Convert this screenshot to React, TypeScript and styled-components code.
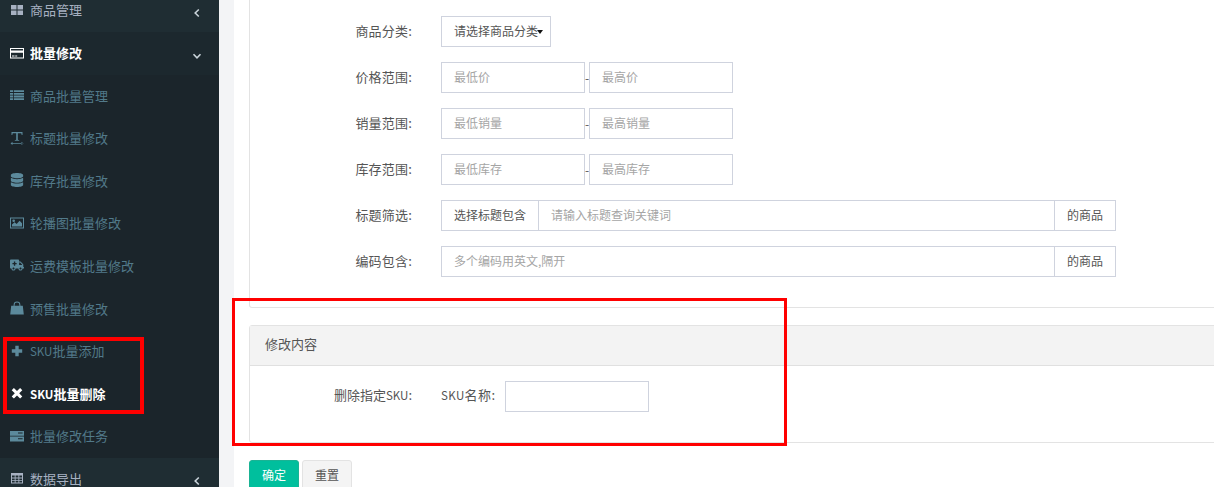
import React from "react";
import styled, { createGlobalStyle } from "styled-components";
import { FaDatabase, FaAmbulance } from "react-icons/fa";

const Global = createGlobalStyle`
  html, body { margin: 0; padding: 0; background: #fff; overflow: hidden; }
  * { box-sizing: border-box; }
  body { font-family: "Noto Sans CJK SC", "Liberation Sans", sans-serif; font-size: 13px; color: #555; }
`;

const Page = styled.div`
  position: relative; display: flex; width: 1214px; height: 487px; overflow: hidden;
`;
const Sidebar = styled.nav`
  flex: 0 0 219px; background: #1b252b; margin-top: -10.4px; height: 510px;
`;
const NavItem = styled.div<{ $kind: "top" | "open" | "sub" | "on" }>`
  display: flex; align-items: center; height: 42.6px; padding: 0 17px 2px 10px; gap: 6px;
  font-size: 13px;
  background: ${(p) => (p.$kind === "top" ? "#1f2d33" : p.$kind === "open" ? "#1c282e" : "transparent")};
  color: ${(p) => (p.$kind === "top" ? "#a7b1c2" : p.$kind === "sub" ? "#527a8a" : "#fff")};
  font-weight: ${(p) => (p.$kind === "open" || p.$kind === "on" ? 700 : 400)};
  & > svg:first-child {
    width: 14px; height: 14px; flex: none;
    color: ${(p) => (p.$kind === "sub" ? "#5c8a9c" : "inherit")};
  }
`;
const NavLabel = styled.span`flex: 1; white-space: nowrap;`;
const Latin = styled.span`font-size: 11.5px;`;
const Chevron = styled.svg`width: 10px; height: 10px; flex: none; color: #c9d3da; margin-top: 6px;`;

const Main = styled.main`
  flex: 1; min-width: 0; background: #fff; border-left: 15px solid #f3f4f6; padding-left: 15px;
  display: flex; flex-direction: column;
`;
const FilterPanel = styled.section`
  width: 1000px; height: 308px; flex: none; background: #fff; border: 1px solid #e3e3e3; border-top: 0;
  border-radius: 0 0 3px 3px; padding-top: 16px; display: flex; flex-direction: column; gap: 15px;
`;
const Row = styled.div`display: flex; align-items: center; height: 31px;`;
const Label = styled.label`
  flex: 0 0 162px; text-align: right; white-space: nowrap; color: #555; margin-right: 29px; padding-bottom: 2px;
  letter-spacing: .2px;
`;
const Select = styled.div`
  position: relative; width: 110px; height: 31px; border: 1px solid #cfd3de; padding: 0 0 2px 12px;
  display: flex; align-items: center; color: #555; white-space: nowrap; overflow: hidden; font-size: 12px;
  &::after {
    content: ""; position: absolute; left: 95px; top: 13px;
    border-left: 3px solid transparent; border-right: 3px solid transparent; border-top: 4px solid #111;
  }
`;
const Input = styled.input<{ $w?: number }>`
  width: ${(p) => p.$w ?? 144}px; height: 31px; border: 1px solid #cfd3de; padding: 0 12px 2px; outline: 0;
  font: 12px "Noto Sans CJK SC", sans-serif; color: #555; background: #fff; border-radius: 0;
  &::placeholder { color: #a5a5a5; opacity: 1; }
`;
const Dash = styled.span`width: 4px; text-align: center; color: #555; font-size: 12px; line-height: 1;`;
const Group = styled.div`display: flex; width: 675px; height: 31px;`;
const Addon = styled.span<{ $w: number; $left?: boolean }>`
  flex: 0 0 ${(p) => p.$w}px; height: 31px; border: 1px solid #cfd3de; display: flex; align-items: center;
  justify-content: center; font-size: 12px; color: #555; white-space: nowrap; padding-bottom: 2px;
  ${(p) => (p.$left ? "border-right: 0;" : "border-left: 0;")}
`;
const GroupInput = styled(Input)`flex: 1; width: auto; min-width: 0;`;

const EditPanel = styled.section`
  width: 1000px; height: 118px; flex: none; margin-top: 17px; border: 1px solid #e3e3e3; border-radius: 3px; background: #fff;
`;
const PanelTitle = styled.h3`
  margin: 0; height: 40px; padding: 0 15px 5px; display: flex; align-items: center; background: #f3f3f3;
  border-bottom: 1px solid #e0e0e0; font-size: 13px; font-weight: 400; color: #555;
`;
const EditRow = styled.div`display: flex; align-items: flex-start; padding-top: 15px;`;
const EditLabel = styled(Label)`padding: 4px 0 0; color: #555; letter-spacing: 0;`;
const SkuLabel = styled.span`
  flex: 0 0 64px; white-space: nowrap; font-size: 13px; line-height: 27px; color: #555; letter-spacing: .4px;
`;
const Actions = styled.div`display: flex; gap: 3px; margin-top: 17px;`;
const Button = styled.button<{ $primary?: boolean }>`
  width: 50px; height: 32px; padding: 0 0 3px; border-radius: 3px; font: 12px "Noto Sans CJK SC", sans-serif;
  border: 1px solid ${(p) => (p.$primary ? "#1ab394" : "#e3e3e3")};
  background: ${(p) => (p.$primary ? "#00bf9d" : "#f4f4f4")};
  color: ${(p) => (p.$primary ? "#fff" : "#555")};
`;
const Marker = styled.div<{ $x: number; $y: number; $w: number; $h: number; $b: number }>`
  position: absolute; left: ${(p) => p.$x}px; top: ${(p) => p.$y}px; width: ${(p) => p.$w}px; height: ${(p) => p.$h}px;
  border: ${(p) => p.$b}px solid #f00; pointer-events: none;
`;

const Svg = ({ children }: { children: React.ReactNode }) => (
  <svg viewBox="0 0 14 14" fill="currentColor" aria-hidden="true">{children}</svg>
);
const IconGrid = () => (
  <Svg><path d="M1 2h5.5v4.5H1zM7.5 2H13v4.5H7.5zM1 7.5h5.5V12H1zM7.5 7.5H13V12H7.5z" /></Svg>
);
const IconCard = () => (
  <Svg><path fillRule="evenodd" d="M0 2h14v10.5H0zM1 3v1.5h12V3zM1 6.8V11.5h12V6.8zM2 9.6h2.5v.8H2zM5.2 9.6h2v.8h-2z" /></Svg>
);
const IconList = () => (
  <Svg><path d="M0 2.2h3v1.8H0zM3.8 2.2H14v1.8H3.8zM0 4.9h3v1.8H0zM3.8 4.9H14v1.8H3.8zM0 7.6h3v1.8H0zM3.8 7.6H14v1.8H3.8zM0 10.3h3v1.8H0zM3.8 10.3H14v1.8H3.8z" /></Svg>
);
const IconText = () => (
  <Svg><path d="M1.5 1h11v3h-.8l-.4-1.8H7.8v6.6l1.4.4v.6H4.8v-.6l1.4-.4V2.2H2.7L2.3 4h-.8zM1 12h12v.8H1zM.5 12.4l2-1.6v3.2zM13.5 12.4l-2-1.6v3.2z" /></Svg>
);
const IconImage = () => (
  <Svg><path fillRule="evenodd" d="M0 1.5h14v11H0zM1 2.5v9h12v-9zM2 10.5V8.6l2.6-2.4 2 1.9 3-3.4 2.4 2.6v3.2zM3.7 3.4a1.3 1.3 0 1 1 0 2.6 1.3 1.3 0 0 1 0-2.6z" /></Svg>
);
const IconBag = () => (
  <Svg><path fillRule="evenodd" d="M1.2 4.8h2.4V3.9a3.4 3.4 0 0 1 6.8 0v.9h2.4L13.8 13.5H.2zM4.6 4.8h4.8V3.9a2.4 2.4 0 0 0-4.8 0z" /></Svg>
);
const IconPlus = () => (
  <Svg><path d="M5.3 1.8h3.4v3.5h3.5v3.4H8.7v3.5H5.3V8.7H1.8V5.3h3.5z" /></Svg>
);
const IconClose = () => (
  <Svg><path d="M3.9 2 7 5.1 10.1 2l2.2 2.2L9.2 7.3l3.1 3.1-2.2 2.2L7 9.5l-3.1 3.1-2.2-2.2 3.1-3.1-3.1-3.1z" /></Svg>
);
const IconDisk = () => (
  <Svg><path fillRule="evenodd" d="M0 2h14v4.8H0zM0 7.6h14V12.4H0zM8 3.6v1h4.6v-1zM8 9.2v1h4.6v-1z" /></Svg>
);
const IconTable = () => (
  <Svg><path fillRule="evenodd" d="M1 2h12v10.5H1zM2 4.6v2h2.7v-2zM5.6 4.6v2h2.8v-2zM9.3 4.6v2H12v-2zM2 7.4v1.9h2.7V7.4zM5.6 7.4v1.9h2.8V7.4zM9.3 7.4v1.9H12V7.4zM2 10.1v1.5h2.7v-1.5zM5.6 10.1v1.5h2.8v-1.5zM9.3 10.1v1.5H12v-1.5z" /></Svg>
);
const AngleLeft = () => (
  <Chevron viewBox="0 0 10 10" fill="none" stroke="currentColor" strokeWidth="1.6"><path d="M6.8 1.5 3.2 5l3.6 3.5" /></Chevron>
);
const AngleDown = () => (
  <Chevron viewBox="0 0 10 10" fill="none" stroke="currentColor" strokeWidth="1.6"><path d="M1.5 3.2 5 6.8l3.5-3.6" /></Chevron>
);

const subs: [React.ComponentType, React.ReactNode, string, "sub" | "on"][] = [
  [IconList, "商品批量管理", "list", "sub"],
  [IconText, "标题批量修改", "title", "sub"],
  [FaDatabase, "库存批量修改", "stock", "sub"],
  [IconImage, "轮播图批量修改", "image", "sub"],
  [FaAmbulance, "运费模板批量修改", "freight", "sub"],
  [IconBag, "预售批量修改", "presale", "sub"],
  [IconPlus, <><Latin>SKU</Latin>批量添加</>, "add", "sub"],
  [IconClose, <><Latin>SKU</Latin>批量删除</>, "remove", "on"],
  [IconDisk, "批量修改任务", "task", "sub"],
];

const ranges: [string, string, string][] = [
  ["价格范围:", "最低价", "最高价"],
  ["销量范围:", "最低销量", "最高销量"],
  ["库存范围:", "最低库存", "最高库存"],
];

export default function App() {
  return (
    <Page>
      <Global />
      <Sidebar>
        <NavItem $kind="top"><IconGrid /><NavLabel>商品管理</NavLabel><AngleLeft /></NavItem>
        <NavItem $kind="open"><IconCard /><NavLabel>批量修改</NavLabel><AngleDown /></NavItem>
        {subs.map(([Icon, text, key, kind]) => (
          <NavItem key={key} $kind={kind}><Icon /><NavLabel>{text}</NavLabel></NavItem>
        ))}
        <NavItem $kind="top"><IconTable /><NavLabel>数据导出</NavLabel><AngleLeft /></NavItem>
      </Sidebar>
      <Main>
        <FilterPanel>
          <Row><Label>商品分类:</Label><Select>请选择商品分类</Select></Row>
          {ranges.map(([l, a, b]) => (
            <Row key={l}><Label>{l}</Label><Input placeholder={a} /><Dash>-</Dash><Input placeholder={b} /></Row>
          ))}
          <Row>
            <Label>标题筛选:</Label>
            <Group>
              <Addon $w={97} $left>选择标题包含</Addon>
              <GroupInput placeholder="请输入标题查询关键词" />
              <Addon $w={61}>的商品</Addon>
            </Group>
          </Row>
          <Row>
            <Label>编码包含:</Label>
            <Group>
              <GroupInput placeholder="多个编码用英文,隔开" />
              <Addon $w={61}>的商品</Addon>
            </Group>
          </Row>
        </FilterPanel>
        <EditPanel>
          <PanelTitle>修改内容</PanelTitle>
          <EditRow>
            <EditLabel>删除指定<Latin>SKU</Latin>:</EditLabel>
            <SkuLabel><Latin>SKU</Latin>名称:</SkuLabel>
            <Input />
          </EditRow>
        </EditPanel>
        <Actions>
          <Button $primary>确定</Button>
          <Button>重置</Button>
        </Actions>
      </Main>
      <Marker $x={3} $y={337} $w={141} $h={77} $b={4} />
      <Marker $x={232} $y={298} $w={555} $h={148} $b={3} />
    </Page>
  );
}
